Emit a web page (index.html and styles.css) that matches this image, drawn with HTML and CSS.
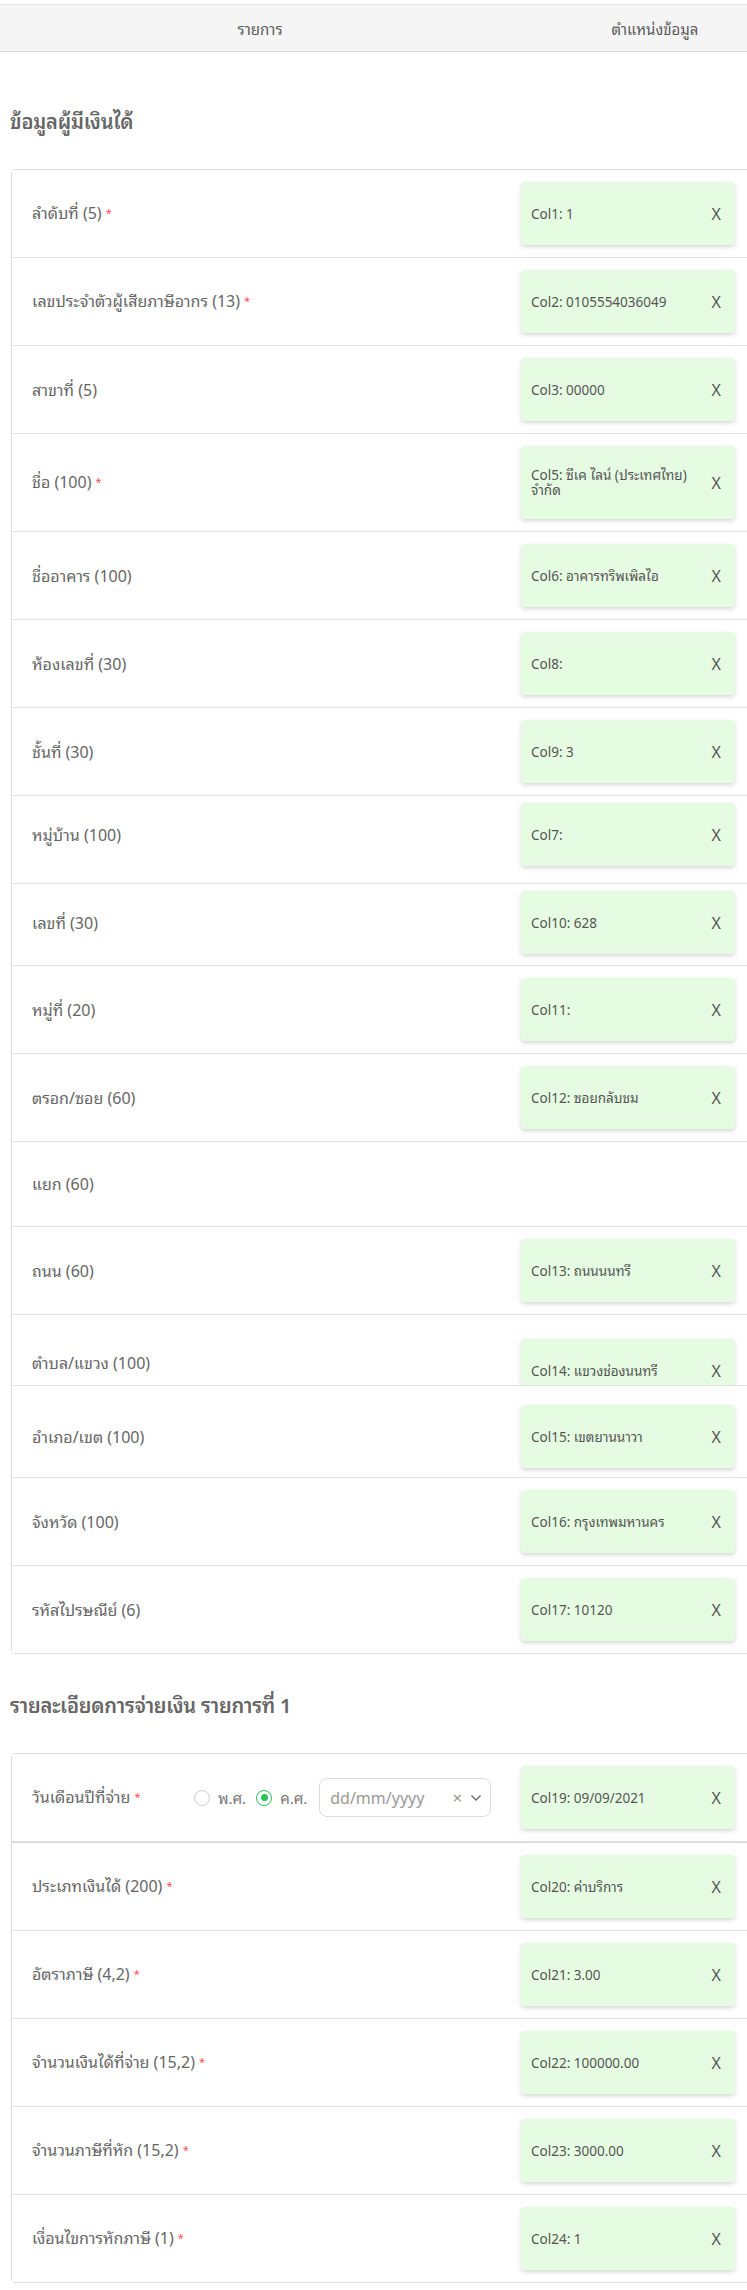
FILE: index.html
```html
<!DOCTYPE html>
<html lang="th">
<head>
<meta charset="utf-8">
<title>Mapping</title>
<link rel="stylesheet" href="styles.css">
</head>
<body>
<div class="page">
  <div class="thead">
    <div class="th th-item">รายการ</div>
    <div class="th th-pos">ตำแหน่งข้อมูล</div>
  </div>

  <h2 class="section-title">ข้อมูลผู้มีเงินได้</h2>
  <div class="card">
    <div class="row"><div class="label">ลำดับที่ (5)<span class="req">*</span></div><div class="chip"><span class="chip-text">Col1: 1</span><span class="chip-x">X</span></div></div>
    <div class="row"><div class="label">เลขประจำตัวผู้เสียภาษีอากร (13)<span class="req">*</span></div><div class="chip"><span class="chip-text">Col2: 0105554036049</span><span class="chip-x">X</span></div></div>
    <div class="row"><div class="label">สาขาที่ (5)</div><div class="chip"><span class="chip-text">Col3: 00000</span><span class="chip-x">X</span></div></div>
    <div class="row"><div class="label">ชื่อ (100)<span class="req">*</span></div><div class="chip"><span class="chip-text">Col5: ซีเค ไลน์ (ประเทศไทย) จำกัด</span><span class="chip-x">X</span></div></div>
    <div class="row"><div class="label">ชื่ออาคาร (100)</div><div class="chip"><span class="chip-text">Col6: อาคารทริพเพิลไอ</span><span class="chip-x">X</span></div></div>
    <div class="row"><div class="label">ห้องเลขที่ (30)</div><div class="chip"><span class="chip-text">Col8:</span><span class="chip-x">X</span></div></div>
    <div class="row"><div class="label">ชั้นที่ (30)</div><div class="chip"><span class="chip-text">Col9: 3</span><span class="chip-x">X</span></div></div>
    <div class="row row-up"><div class="label">หมู่บ้าน (100)</div><div class="chip"><span class="chip-text">Col7:</span><span class="chip-x">X</span></div></div>
    <div class="row row-tight"><div class="label">เลขที่ (30)</div><div class="chip"><span class="chip-text">Col10: 628</span><span class="chip-x">X</span></div></div>
    <div class="row"><div class="label">หมู่ที่ (20)</div><div class="chip"><span class="chip-text">Col11:</span><span class="chip-x">X</span></div></div>
    <div class="row"><div class="label">ตรอก/ซอย (60)</div><div class="chip"><span class="chip-text">Col12: ซอยกลับชม</span><span class="chip-x">X</span></div></div>
    <div class="row row-empty"><div class="label">แยก (60)</div></div>
    <div class="row"><div class="label">ถนน (60)</div><div class="chip"><span class="chip-text">Col13: ถนนนนทรี</span><span class="chip-x">X</span></div></div>
    <div class="row row-clipped"><div class="label">ตำบล/แขวง (100)</div><div class="chip"><span class="chip-text">Col14: แขวงช่องนนทรี</span><span class="chip-x">X</span></div></div>
    <div class="row row-down"><div class="label">อำเภอ/เขต (100)</div><div class="chip"><span class="chip-text">Col15: เขตยานนาวา</span><span class="chip-x">X</span></div></div>
    <div class="row"><div class="label">จังหวัด (100)</div><div class="chip"><span class="chip-text">Col16: กรุงเทพมหานคร</span><span class="chip-x">X</span></div></div>
    <div class="row"><div class="label">รหัสไปรษณีย์ (6)</div><div class="chip"><span class="chip-text">Col17: 10120</span><span class="chip-x">X</span></div></div>
  </div>

  <h2 class="section-title section-title-2">รายละเอียดการจ่ายเงิน รายการที่ 1</h2>
  <div class="card">
    <div class="row row-date">
      <div class="label label-date">
        <span class="date-label">วันเดือนปีที่จ่าย<span class="req">*</span></span>
        <span class="radio-group">
          <span class="radio"></span><span class="radio-text">พ.ศ.</span>
          <span class="radio radio-on"></span><span class="radio-text">ค.ศ.</span>
          <span class="date-input">
            <span class="date-ph">dd/mm/yyyy</span>
            <span class="date-clear">×</span>
            <svg class="date-caret" width="12" height="8" viewBox="0 0 12 8"><path d="M1.5 1.5 L6 6 L10.5 1.5" fill="none" stroke="#666" stroke-width="1.3"/></svg>
          </span>
        </span>
      </div>
      <div class="chip"><span class="chip-text">Col19: 09/09/2021</span><span class="chip-x">X</span></div>
    </div>
    <div class="row"><div class="label">ประเภทเงินได้ (200)<span class="req">*</span></div><div class="chip"><span class="chip-text">Col20: ค่าบริการ</span><span class="chip-x">X</span></div></div>
    <div class="row"><div class="label">อัตราภาษี (4,2)<span class="req">*</span></div><div class="chip"><span class="chip-text">Col21: 3.00</span><span class="chip-x">X</span></div></div>
    <div class="row"><div class="label">จำนวนเงินได้ที่จ่าย (15,2)<span class="req">*</span></div><div class="chip"><span class="chip-text">Col22: 100000.00</span><span class="chip-x">X</span></div></div>
    <div class="row"><div class="label">จำนวนภาษีที่หัก (15,2)<span class="req">*</span></div><div class="chip"><span class="chip-text">Col23: 3000.00</span><span class="chip-x">X</span></div></div>
    <div class="row"><div class="label">เงื่อนไขการหักภาษี (1)<span class="req">*</span></div><div class="chip"><span class="chip-text">Col24: 1</span><span class="chip-x">X</span></div></div>
  </div>
</div>
</body>
</html>
```

FILE: styles.css
```css
html, body {
  margin: 0;
  padding: 0;
  overflow-x: hidden;
  background: #fff;
}
body {
  font-family: "Noto Sans", "Noto Sans Thai Looped", "Sarabun", "Tahoma", "Leelawadee UI", "Loma", "Garuda", "Waree", "Noto Sans Thai", sans-serif;
  color: #555;
}
.page {
  width: 790px;
  padding-top: 4px;
}
.thead {
  display: flex;
  height: 46px;
  background: #f5f5f5;
  border-top: 1px solid #e3e3e3;
  border-bottom: 1px solid #d9d9d9;
}
.th {
  display: flex;
  align-items: center;
  justify-content: center;
  font-size: 15px;
  color: #5a5a5a;
}
.th-item { width: 520px; }
.th-pos { width: 270px; }

.section-title {
  margin: 55px 0 32px 10px;
  font-size: 20px;
  line-height: 30px;
  font-weight: 600;
  letter-spacing: -0.2px;
  color: #666;
}
.section-title-2 { margin-top: 37px; }

.card {
  margin: 0 11px;
  border: 1px solid #dedede;
  border-radius: 4px;
  background: #fff;
}
.row {
  display: flex;
  align-items: center;
  padding: 12px 43px 12px 20px;
  border-bottom: 1px solid #e2e2e2;
  background: #fff;
}
.row:last-child { border-bottom: none; }
.row-empty { min-height: 60px; }
.row-up { padding-top: 7px; padding-bottom: 17px; }
.row-tight { padding-top: 7px; padding-bottom: 11px; }
.row-clipped {
  height: 71px;
  box-sizing: border-box;
  overflow: hidden;
  align-items: flex-start;
  padding-top: 24px;
  padding-bottom: 0;
}
.row-clipped .label { margin-top: 13px; }
.row-down { padding-top: 19px; padding-bottom: 9px; }
.row-date { border-bottom: 2px solid #dcdcdc; }

.label {
  flex: 1;
  font-size: 16px;
  line-height: 22px;
  color: #666;
}
.req {
  color: #ff4d4f;
  font-size: 11px;
  margin-left: 4px;
  position: relative;
  top: -2px;
}
.chip {
  width: 214px;
  min-height: 63px;
  box-sizing: border-box;
  padding: 22px 14px 21px 10px;
  display: flex;
  align-items: center;
  background: #e5fce2;
  border-radius: 4px;
  box-shadow: 0 2px 4px rgba(0, 0, 0, 0.16);
}
.chip-text {
  flex: 1;
  font-size: 13.5px;
  line-height: 15px;
  color: #555;
  padding-right: 12px;
}
.chip-x {
  font-size: 16px;
  line-height: 15px;
  color: #555;
}

.label-date {
  display: flex;
  align-items: center;
}
.date-label { width: 162px; }
.radio-group {
  display: flex;
  align-items: center;
}
.radio {
  width: 14px;
  height: 14px;
  border: 1px solid #d0d0d0;
  border-radius: 50%;
  box-sizing: content-box;
  display: flex;
  align-items: center;
  justify-content: center;
}
.radio-on {
  border: 1.5px solid #27c45a;
  margin-left: 10px;
}
.radio-on::after {
  content: "";
  width: 7px;
  height: 7px;
  border-radius: 50%;
  background: #27c45a;
}
.radio-text {
  margin-left: 8px;
  font-size: 15px;
  color: #777;
}
.date-input {
  margin-left: 12px;
  width: 172px;
  height: 39px;
  box-sizing: border-box;
  border: 1px solid #dcdcdc;
  border-radius: 8px;
  display: flex;
  align-items: center;
  padding: 0 8px 0 10px;
}
.date-ph {
  flex: 1;
  font-size: 16px;
  color: #999;
}
.date-clear {
  font-size: 17px;
  color: #999;
  margin-right: 8px;
}
.date-caret { display: block; }
```
